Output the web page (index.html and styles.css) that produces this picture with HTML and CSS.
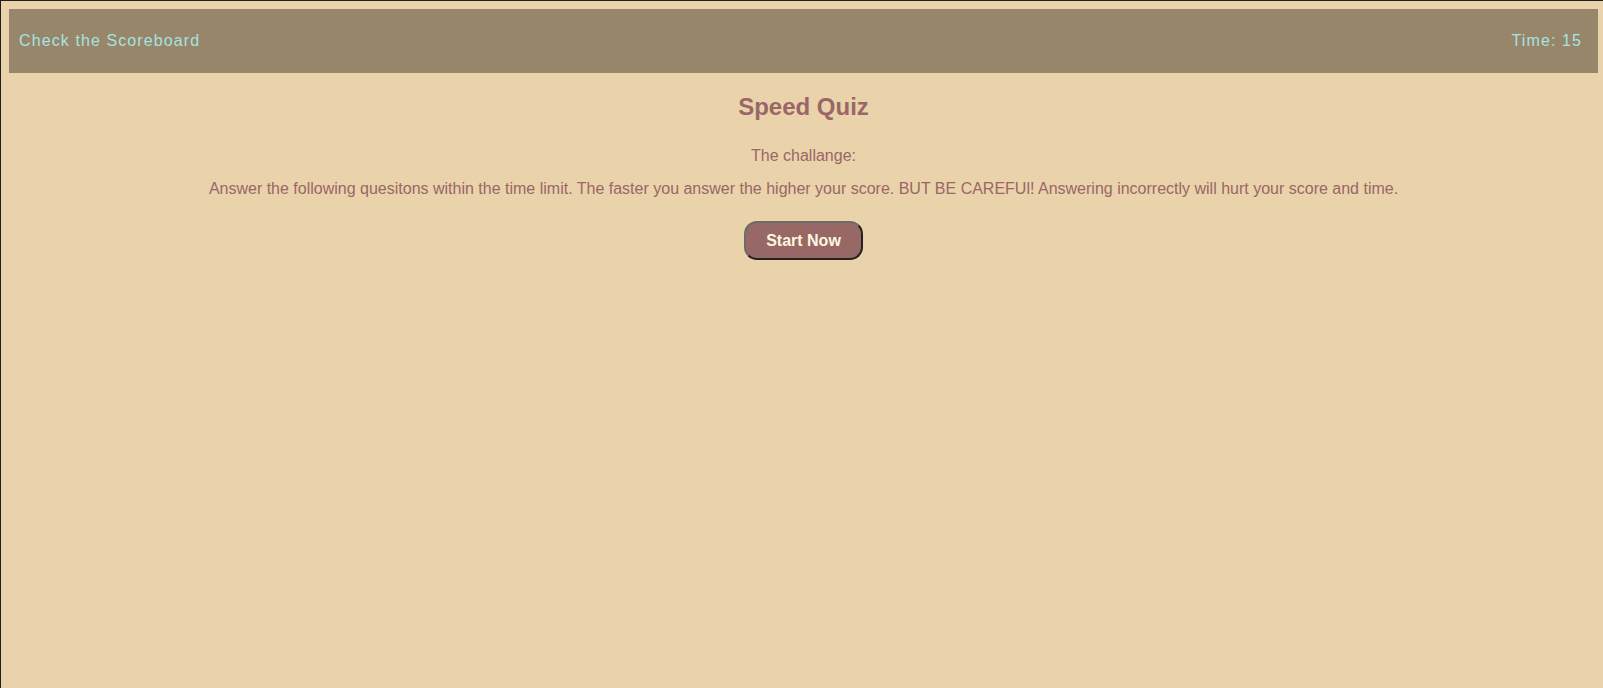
FILE: index.html
```html
<!DOCTYPE html>
<html lang="en">
<head>
<meta charset="utf-8">
<title>Speed Quiz</title>
<link rel="stylesheet" href="styles.css">
</head>
<body>
<header class="topbar">
  <a class="scores" href="#">Check the Scoreboard</a>
  <span class="timer">Time: 15</span>
</header>
<main class="intro">
  <h1 class="title">Speed Quiz</h1>
  <p class="lead">The challange:</p>
  <p class="lead">Answer the following quesitons within the time limit. The faster you answer the higher your score. BUT BE CAREFUl! Answering incorrectly will hurt your score and time.</p>
  <button class="start" type="button">Start Now</button>
</main>
</body>
</html>
```

FILE: styles.css
```css
html {
  min-height: 100%;
  box-sizing: border-box;
  background: #ead3ab;
  border-top: 1px solid #1f1f1f;
  border-left: 1px solid #1f1f1f;
}
body {
  margin: 8px 5px 8px 8px;
  font-family: "Liberation Sans", Arial, sans-serif;
  color: #9a6666;
}
.topbar {
  display: flex;
  justify-content: space-between;
  align-items: center;
  height: 64px;
  padding: 0 16px 0 10px;
  background: #97866a;
  color: #a6e3e1;
  font-size: 16px;
  letter-spacing: 1.1px;
}
.scores {
  color: inherit;
  text-decoration: none;
}
.intro {
  display: flex;
  flex-direction: column;
  align-items: center;
  text-align: center;
}
.title {
  font-size: 24px;
  margin: 20px 0 26px;
}
.lead {
  font-size: 16px;
  margin: 0 0 15px;
}
.start {
  margin-top: 8px;
  width: 119px;
  height: 39px;
  background: #976866;
  color: #fff6df;
  font-family: inherit;
  font-size: 16px;
  font-weight: bold;
  border: 2px solid;
  border-color: #6b6b6b #222 #222 #6b6b6b;
  border-radius: 13px;
}
```
